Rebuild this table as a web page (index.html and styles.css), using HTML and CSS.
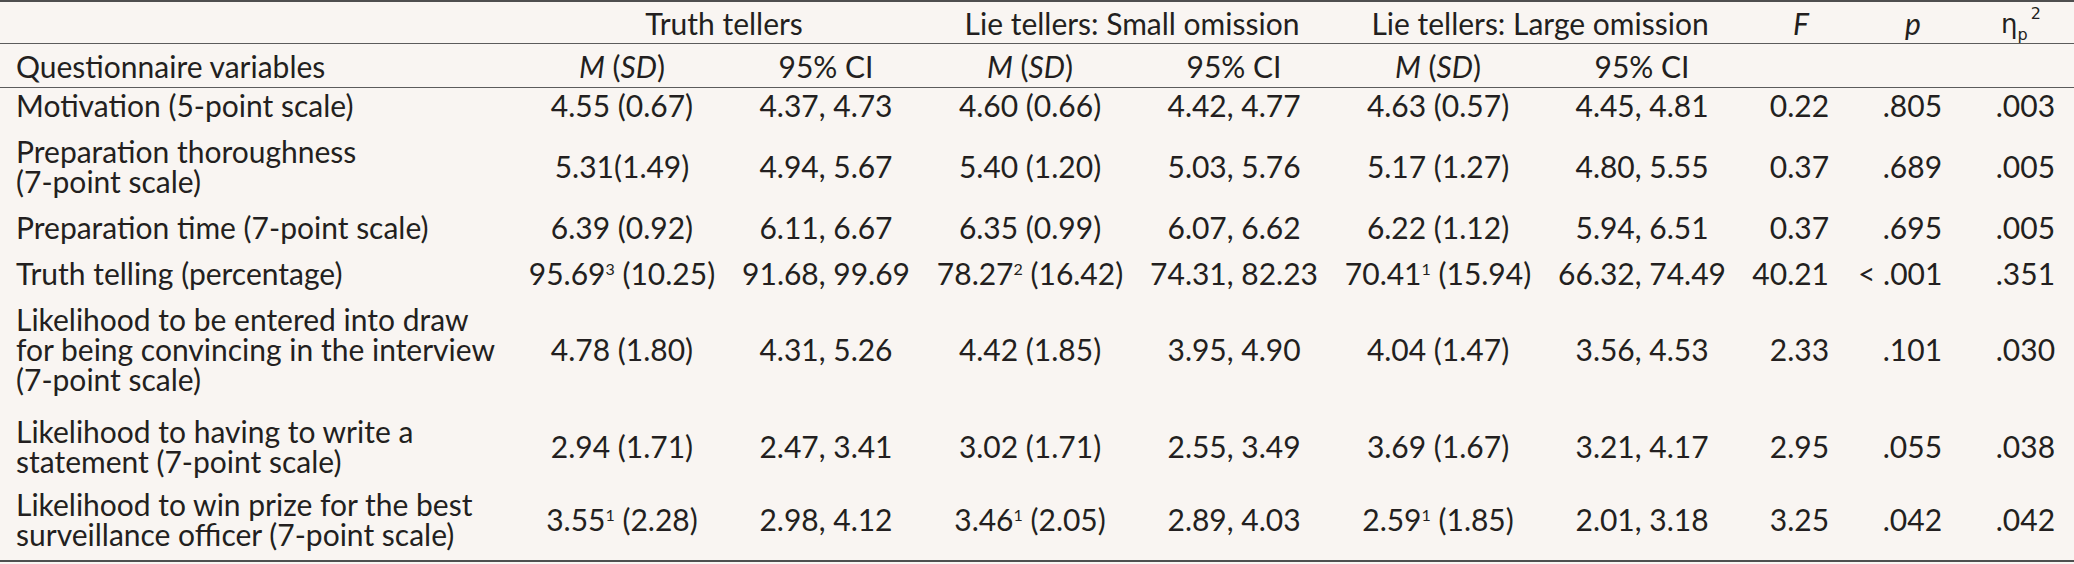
FILE: index.html
```html
<!DOCTYPE html>
<html lang="en">
<head>
<meta charset="utf-8">
<title>Questionnaire variables by condition</title>
<link rel="stylesheet" href="styles.css">
</head>
<body>
<table class="stats">
  <colgroup>
    <col class="col-label">
    <col class="col-num"><col class="col-num">
    <col class="col-num"><col class="col-num">
    <col class="col-num"><col class="col-num">
    <col class="col-f"><col class="col-p"><col class="col-eta">
  </colgroup>
  <thead>
    <tr class="group-row">
      <th class="label"></th>
      <th colspan="2" class="grp grp-truth">Truth tellers</th>
      <th colspan="2" class="grp grp-small">Lie tellers: Small omission</th>
      <th colspan="2" class="grp grp-large">Lie tellers: Large omission</th>
      <th class="stat stat-f"><i>F</i></th>
      <th class="stat stat-p"><i>p</i></th>
      <th class="stat stat-eta"><span class="eta">η</span><sub>p</sub><sup>2</sup></th>
    </tr>
    <tr class="sub-row">
      <th class="label">Questionnaire variables</th>
      <th class="sub"><i>M</i> (<i>SD</i>)</th>
      <th class="sub">95% CI</th>
      <th class="sub"><i>M</i> (<i>SD</i>)</th>
      <th class="sub">95% CI</th>
      <th class="sub"><i>M</i> (<i>SD</i>)</th>
      <th class="sub">95% CI</th>
      <th></th>
      <th></th>
      <th></th>
    </tr>
  </thead>
  <tbody>
    <tr>
      <td class="label">Motivation (5-point scale)</td>
      <td>4.55 (0.67)</td><td>4.37, 4.73</td>
      <td>4.60 (0.66)</td><td>4.42, 4.77</td>
      <td>4.63 (0.57)</td><td>4.45, 4.81</td>
      <td class="v-f">0.22</td><td class="v-p">.805</td><td class="v-eta">.003</td>
    </tr>
    <tr>
      <td class="label">Preparation thoroughness<br>(7-point scale)</td>
      <td>5.31(1.49)</td><td>4.94, 5.67</td>
      <td>5.40 (1.20)</td><td>5.03, 5.76</td>
      <td>5.17 (1.27)</td><td>4.80, 5.55</td>
      <td class="v-f">0.37</td><td class="v-p">.689</td><td class="v-eta">.005</td>
    </tr>
    <tr>
      <td class="label">Preparation time (7-point scale)</td>
      <td>6.39 (0.92)</td><td>6.11, 6.67</td>
      <td>6.35 (0.99)</td><td>6.07, 6.62</td>
      <td>6.22 (1.12)</td><td>5.94, 6.51</td>
      <td class="v-f">0.37</td><td class="v-p">.695</td><td class="v-eta">.005</td>
    </tr>
    <tr>
      <td class="label">Truth telling (percentage)</td>
      <td>95.69<sup class="note">3</sup> (10.25)</td><td>91.68, 99.69</td>
      <td>78.27<sup class="note">2</sup> (16.42)</td><td>74.31, 82.23</td>
      <td>70.41<sup class="note">1</sup> (15.94)</td><td>66.32, 74.49</td>
      <td class="v-f">40.21</td><td class="v-p">&lt; .001</td><td class="v-eta">.351</td>
    </tr>
    <tr class="row-roomy">
      <td class="label">Likelihood to be entered into draw<br>for being convincing in the interview<br>(7-point scale)</td>
      <td>4.78 (1.80)</td><td>4.31, 5.26</td>
      <td>4.42 (1.85)</td><td>3.95, 4.90</td>
      <td>4.04 (1.47)</td><td>3.56, 4.53</td>
      <td class="v-f">2.33</td><td class="v-p">.101</td><td class="v-eta">.030</td>
    </tr>
    <tr class="row-snug">
      <td class="label">Likelihood to having to write a<br>statement (7-point scale)</td>
      <td>2.94 (1.71)</td><td>2.47, 3.41</td>
      <td>3.02 (1.71)</td><td>2.55, 3.49</td>
      <td>3.69 (1.67)</td><td>3.21, 4.17</td>
      <td class="v-f">2.95</td><td class="v-p">.055</td><td class="v-eta">.038</td>
    </tr>
    <tr class="row-snug last">
      <td class="label">Likelihood to win prize for the best<br>surveillance officer (7-point scale)</td>
      <td>3.55<sup class="note">1</sup> (2.28)</td><td>2.98, 4.12</td>
      <td>3.46<sup class="note">1</sup> (2.05)</td><td>2.89, 4.03</td>
      <td>2.59<sup class="note">1</sup> (1.85)</td><td>2.01, 3.18</td>
      <td class="v-f">3.25</td><td class="v-p">.042</td><td class="v-eta">.042</td>
    </tr>
  </tbody>
</table>
</body>
</html>
```

FILE: styles.css
```css
html, body {
  margin: 0;
  padding: 0;
  background: #f9f5f2;
}

body {
  font-family: Lato, "Liberation Sans", sans-serif;
  color: #231f20;
}

.stats {
  width: 2074px;
  border-collapse: collapse;
  table-layout: fixed;
  font-size: 30px;
  line-height: 30px;
}

.col-label { width: 520px; }
.col-num { width: 204px; }
.col-f { width: 114px; }
.col-p { width: 110px; }
.col-eta { width: 106px; }

.stats th {
  font-weight: normal;
  text-align: center;
  vertical-align: middle;
  padding: 0;
  white-space: nowrap;
}

.group-row th {
  height: 41px;
  border-top: 2px solid #4f4f4f;
  border-bottom: 1px solid #5c5c5c;
}

.sub-row th {
  height: 43px;
  border-bottom: 1px solid #5c5c5c;
}

.stats .label {
  text-align: left;
  padding-left: 16px;
}

.grp-truth { padding-right: 24px; }
.grp-small { padding-right: 70px; }
.grp-large { padding-right: 74px; }

.stat-f { padding-right: 20px; }
.stat-p { padding-right: 22px; }
.stat-eta { padding-right: 10px; }

.sub { padding-right: 8px; }

.eta {
  font-family: "DejaVu Sans", sans-serif;
  font-size: 26px;
}

.stat-eta sub {
  font-family: "DejaVu Sans", sans-serif;
  font-size: 16px;
  line-height: 0;
  vertical-align: -7px;
}

.stat-eta sup {
  font-family: "DejaVu Sans", sans-serif;
  font-size: 16px;
  line-height: 0;
  vertical-align: 14px;
  margin-left: 3px;
}

.stats td {
  text-align: center;
  vertical-align: middle;
  padding: 2px 0 14px;
  white-space: nowrap;
}

.stats .row-roomy td { padding-bottom: 20px; }
.stats .row-snug td { padding-bottom: 11px; }

.stats td.v-f { text-align: right; padding-right: 29px; }
.stats td.v-p { text-align: right; padding-right: 26px; }
.stats td.v-eta { text-align: right; padding-right: 19px; }

.note {
  font-size: 16px;
  line-height: 0;
  vertical-align: 10px;
}

.last td {
  border-bottom: 2px solid #4f4f4f;
}
```
